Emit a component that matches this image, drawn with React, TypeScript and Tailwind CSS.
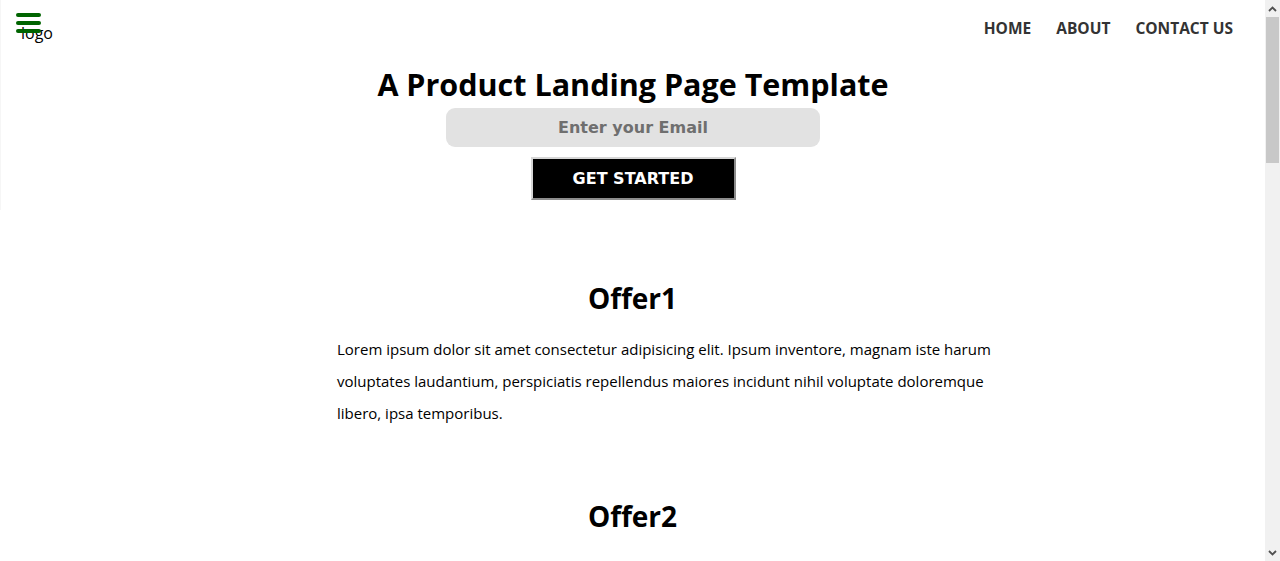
import React from "react";

const offers = [1, 2, 3, 4, 5, 6, 7, 8];

const lorem =
  "Lorem ipsum dolor sit amet consectetur adipisicing elit. Ipsum inventore, magnam iste harum voluptates laudantium, perspiciatis repellendus maiores incidunt nihil voluptate doloremque libero, ipsa temporibus.";

function Hamburger() {
  return (
    <button
      aria-label="Open menu"
      className="absolute left-[15px] top-[13px] flex flex-col gap-[4px]"
    >
      <span className="block w-[25px] h-[4px] rounded-full bg-[#006400]" />
      <span className="block w-[25px] h-[4px] rounded-full bg-[#006400]" />
      <span className="block w-[25px] h-[4px] rounded-full bg-[#006400]" />
    </button>
  );
}

// looks like the classic windows scrollbar from the screenshot
function ScrollRail() {
  return (
    <div className="w-[15px] shrink-0 h-full bg-[#f1f1f1] flex flex-col">
      <div className="h-[17px] flex items-center justify-center">
        <svg width="9" height="6" viewBox="0 0 9 6">
          <path d="M1 5 L4.5 1.5 L8 5" fill="none" stroke="#505050" strokeWidth="1.8" />
        </svg>
      </div>
      <div className="mx-[1px] h-[146px] bg-[#c8c8c8]" />
      <div className="flex-1" />
      <div className="h-[17px] flex items-center justify-center">
        <svg width="9" height="6" viewBox="0 0 9 6">
          <path d="M1 1 L4.5 4.5 L8 1" fill="none" stroke="#505050" strokeWidth="1.8" />
        </svg>
      </div>
    </div>
  );
}

export default function App() {
  return (
    <div className="h-screen flex bg-white text-black font-['Open_Sans',sans-serif]">
      <div className="flex-1 min-w-0 overflow-y-auto [scrollbar-width:none]">
        {/* Header / hero */}
        <header className="relative h-[210px] border-l border-[#f6f6f6] flex flex-col items-center">
          <div className="w-full h-[58px] flex items-center justify-between pl-[20px] pr-[32px]">
            <span className="text-[16px] leading-none pt-[8px]">logo</span>
            <nav className="flex items-center gap-[25px] text-[15.5px] font-bold text-[#333]">
              <a href="#">HOME</a>
              <a href="#">ABOUT</a>
              <a href="#">CONTACT US</a>
            </nav>
          </div>
          <Hamburger />

          <h1 className="mt-[8px] text-[30.5px] leading-[36px] font-bold">
            A Product Landing Page Template
          </h1>
          <input
            type="email"
            placeholder="Enter your Email"
            className="mt-[6px] w-[374px] h-[39px] rounded-[9px] bg-[#e2e2e2] text-center text-[16px] font-bold font-['DejaVu_Sans',sans-serif] placeholder:text-[#6f6f6f] outline-none"
          />
          <button className="mt-[10px] w-[205px] h-[43px] bg-black text-white text-[16px] font-bold font-['DejaVu_Sans',sans-serif] border-2 border-t-[#d6d6d6] border-l-[#d6d6d6] border-r-[#8c8c8c] border-b-[#8c8c8c]">
            GET STARTED
          </button>
        </header>

        {/* Offers */}
        <main className="pt-[70px] pb-[70px] flex flex-col gap-[69px]">
          {offers.map((n) => (
            <section key={n} className="flex flex-col">
              <h2 className="text-center text-[28px] leading-[36px] font-bold">
                Offer{n}
              </h2>
              <p className="mt-[17px] ml-[337px] max-w-[680px] text-[15px] leading-[32px]">
                {lorem}
              </p>
            </section>
          ))}
        </main>
      </div>
      <ScrollRail />
    </div>
  );
}
